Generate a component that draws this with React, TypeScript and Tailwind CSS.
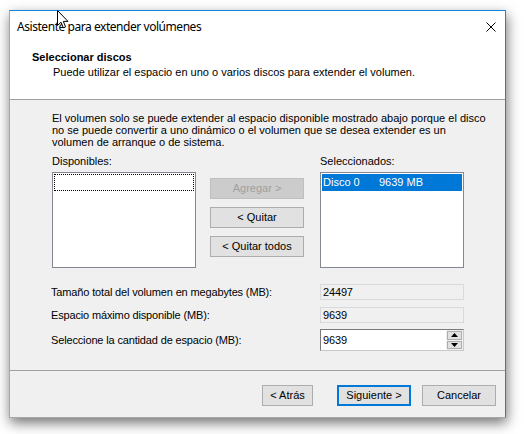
import React from "react";

// Windows 10 "Extend Volume Wizard" page, Spanish locale.
const body = "font-['Liberation_Sans',Arial,sans-serif] text-[11px] leading-[13px] text-black";

function WinButton({
  children,
  className = "",
  disabled = false,
  primary = false,
}: {
  children: React.ReactNode;
  className?: string;
  disabled?: boolean;
  primary?: boolean;
}) {
  const look = disabled
    ? "border border-[#bfbfbf] bg-[#cccccc] text-[#a0a0a0]"
    : primary
      ? "border-2 border-[#0078d7] bg-[#e1e1e1] text-black"
      : "border border-[#adadad] bg-[#e1e1e1] text-black";
  return (
    <div className={`flex h-[21px] items-center justify-center ${look} ${className}`}>
      {children}
    </div>
  );
}

function ReadOnlyField({ value }: { value: string }) {
  return (
    <div className="flex h-[16px] w-[144px] items-center border border-[#d9d9d9] bg-[#f0f0f0] pl-[2px]">
      {value}
    </div>
  );
}

function Cursor() {
  return (
    <svg
      className="absolute left-[47px] top-[-1px]"
      width="13"
      height="20"
      viewBox="0 0 13 20"
    >
      <path
        d="M0.5 0.5 L0.5 15.5 L4 12.2 L6.3 17.8 L8.6 16.8 L6.3 11.4 L11 11.4 Z"
        fill="#fff"
        stroke="#000"
        strokeWidth="1"
        strokeLinejoin="miter"
      />
    </svg>
  );
}

export default function App() {
  return (
    <div className="min-h-screen bg-white pl-[9px] pt-[10px]">
      <div
        className={`relative flex h-[408px] w-[497px] flex-col border border-[#a8a8a8] border-r-[#1883d7] border-t-[#1883d7] bg-[#f0f0f0] shadow-[1px_5px_12px_rgba(0,0,0,0.55)] ${body}`}
      >
        {/* title bar */}
        <div className="flex h-[31px] items-center justify-between bg-white pl-[7px] pr-[9px]">
          <span className="font-['Noto_Sans',sans-serif] text-[12px] leading-[16px] tracking-[-0.45px] text-black">
            Asistente para extender volúmenes
          </span>
          <svg width="10" height="10" viewBox="0 0 10 10">
            <path d="M0.5 0.5 L9.5 9.5 M9.5 0.5 L0.5 9.5" stroke="#000" strokeWidth="1" />
          </svg>
        </div>
        <Cursor />

        {/* page header */}
        <div className="h-[58px] border-b border-[#a0a0a0] bg-white pl-[22px] pt-[9px]">
          <p className="font-bold">Seleccionar discos</p>
          <p className="mt-[2px] pl-[21px]">
            Puede utilizar el espacio en uno o varios discos para extender el volumen.
          </p>
        </div>

        {/* page body */}
        <div className="flex-1 pl-[42px] pt-[12px]">
          <p className="leading-[12px]">
            <span className="block">
              El volumen solo se puede extender al espacio disponible mostrado abajo porque el disco
            </span>
            <span className="block">
              no se puede convertir a uno dinámico o el volumen que se desea extender es un
            </span>
            <span className="block">volumen de arranque o de sistema.</span>
          </p>

          <div className="mt-[7px] flex items-start">
            <div className="w-[144px]">
              <p>Disponibles:</p>
              <div className="mt-[4px] h-[96px] border border-[#828790] bg-white p-px">
                <div className="h-[17px] border border-dotted border-black" />
              </div>
            </div>

            <div className="ml-[14px] mt-[23px] flex w-[94px] flex-col gap-[8px]">
              <WinButton disabled>Agregar &gt;</WinButton>
              <WinButton>&lt; Quitar</WinButton>
              <WinButton>&lt; Quitar todos</WinButton>
            </div>

            <div className="ml-[16px] w-[144px]">
              <p>Seleccionados:</p>
              <div className="mt-[4px] h-[96px] border border-[#828790] bg-white p-px">
                <div className="flex h-[17px] items-center bg-[#0078d7] pl-px text-white">
                  <span className="w-[56px]">Disco 0</span>
                  <span>9639 MB</span>
                </div>
              </div>
            </div>
          </div>

          <div className="ml-[-1px] mt-[16px] flex w-[413px] flex-col tracking-[-0.15px]">
            <div className="flex items-center justify-between">
              <span>Tamaño total del volumen en megabytes (MB):</span>
              <ReadOnlyField value="24497" />
            </div>
            <div className="mt-[7px] flex items-center justify-between">
              <span>Espacio máximo disponible (MB):</span>
              <ReadOnlyField value="9639" />
            </div>
            <div className="mt-[6px] flex items-center justify-between">
              <span>Seleccione la cantidad de espacio (MB):</span>
              <div className="flex h-[22px] w-[144px] border border-[#7a7a7a] border-b-[#c8c8c8] border-r-[#c8c8c8] bg-white">
                <div className="flex flex-1 items-center pl-[2px]">9639</div>
                <div className="flex w-[17px] flex-col gap-px bg-[#f0f0f0] p-px">
                  <div className="flex flex-1 items-center justify-center border border-[#adadad] bg-[#e1e1e1]">
                    <svg width="7" height="4" viewBox="0 0 7 4">
                      <path d="M3.5 0 L7 4 L0 4 Z" fill="#000" />
                    </svg>
                  </div>
                  <div className="flex flex-1 items-center justify-center border border-[#adadad] bg-[#e1e1e1]">
                    <svg width="7" height="4" viewBox="0 0 7 4">
                      <path d="M0 0 L7 0 L3.5 4 Z" fill="#000" />
                    </svg>
                  </div>
                </div>
              </div>
            </div>
          </div>
        </div>

        {/* wizard buttons */}
        <div className="flex h-[47px] items-start justify-end border-t border-[#a0a0a0] pr-[9px] pt-[14px]">
          <WinButton className="w-[51px]">&lt; Atrás</WinButton>
          <WinButton primary className="ml-[24px] w-[74px]">
            Siguiente &gt;
          </WinButton>
          <WinButton className="ml-[11px] w-[74px]">Cancelar</WinButton>
        </div>
      </div>
    </div>
  );
}
